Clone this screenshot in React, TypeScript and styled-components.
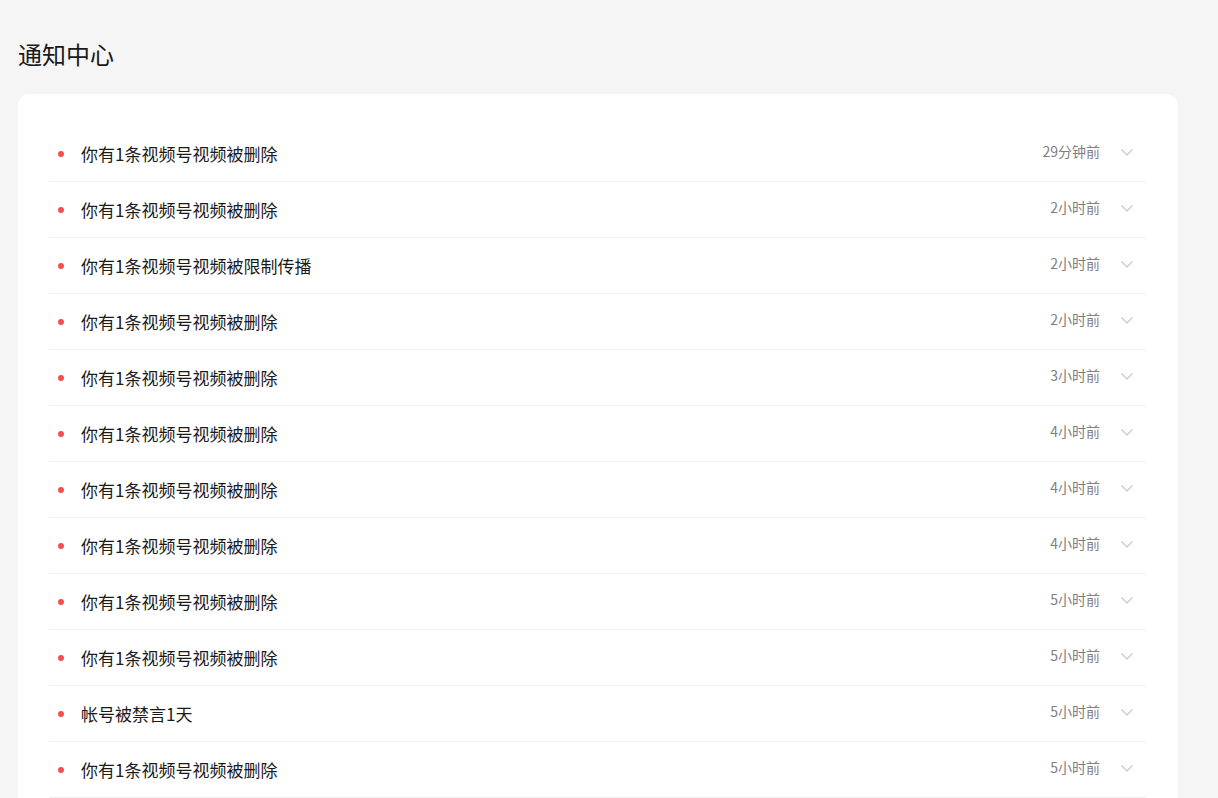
import styled, { createGlobalStyle } from "styled-components";

const GlobalStyle = createGlobalStyle`
  html, body {
    margin: 0;
    padding: 0;
    height: 100%;
    overflow: hidden;
    background: #f5f5f5;
    font-family: "Noto Sans CJK SC", "Noto Sans", sans-serif;
  }
`;

const notices = [
  { title: "你有1条视频号视频被删除", time: "29分钟前" },
  { title: "你有1条视频号视频被删除", time: "2小时前" },
  { title: "你有1条视频号视频被限制传播", time: "2小时前" },
  { title: "你有1条视频号视频被删除", time: "2小时前" },
  { title: "你有1条视频号视频被删除", time: "3小时前" },
  { title: "你有1条视频号视频被删除", time: "4小时前" },
  { title: "你有1条视频号视频被删除", time: "4小时前" },
  { title: "你有1条视频号视频被删除", time: "4小时前" },
  { title: "你有1条视频号视频被删除", time: "5小时前" },
  { title: "你有1条视频号视频被删除", time: "5小时前" },
  { title: "帐号被禁言1天", time: "5小时前" },
  { title: "你有1条视频号视频被删除", time: "5小时前" },
];

const App = () => {
  return (
    <Page>
      <GlobalStyle />
      <Title>通知中心</Title>
      <Card>
        {notices.map((n, i) => (
          <Row key={i}>
            <Dot />
            <RowTitle>{n.title}</RowTitle>
            <Time>{n.time}</Time>
            <Chevron width="12" height="7" viewBox="0 0 12 7">
              <path d="M0.5 0.5 L6 6 L11.5 0.5" fill="none" stroke="#c4c4c4" strokeWidth="1.1" />
            </Chevron>
          </Row>
        ))}
      </Card>
    </Page>
  );
};

const Page = styled.div`
  padding: 36px 40px 0 18px;
`;

const Title = styled.h1`
  margin: 0 0 22px;
  font-size: 24px;
  font-weight: 400;
  line-height: 36px;
  color: #1a1a1a;
`;

const Card = styled.div`
  background: #ffffff;
  border-radius: 12px;
  padding: 32px 32px 40px;
`;

const Row = styled.div`
  display: flex;
  align-items: center;
  height: 56px;
  box-sizing: border-box;
  border-bottom: 1px solid #efefef;
  padding: 0 13px 0 8px;
`;

const Dot = styled.span`
  width: 6px;
  height: 6px;
  border-radius: 50%;
  background: #f5504f;
  flex-shrink: 0;
`;

const RowTitle = styled.span`
  flex: 1;
  margin-left: 17px;
  font-size: 17px;
  color: #1a1a1a;
  line-height: 24px;
`;

const Time = styled.span`
  font-size: 14px;
  color: #808080;
  line-height: 20px;
  margin-bottom: 5px;
`;

const Chevron = styled.svg`
  margin-left: 21px;
  margin-bottom: 3px;
  flex-shrink: 0;
`;

export default App;
